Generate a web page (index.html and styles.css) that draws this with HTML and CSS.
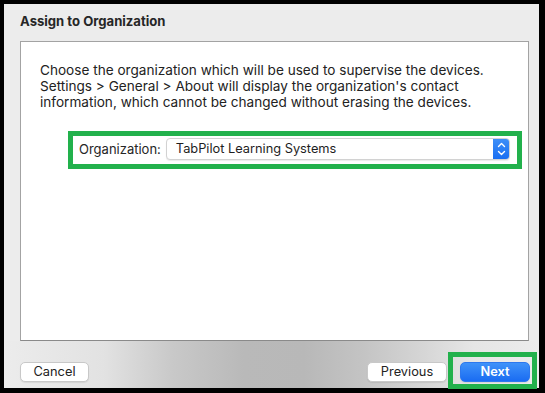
FILE: index.html
```html
<!DOCTYPE html>
<html>
<head>
<meta charset="utf-8">
<link rel="stylesheet" href="styles.css">
</head>
<body>
<div class="window">
  <div class="title">Assign to Organization</div>
  <div class="content">
    <p class="desc">Choose the organization which will be used to supervise the devices.<br>Settings &gt; General &gt; About will display the organization's contact<br>information, which cannot be changed without erasing the devices.</p>
    <div class="org-row">
      <span class="org-label">Organization:</span>
      <div class="popup">
        <span class="popup-text">TabPilot Learning Systems</span>
        <span class="stepper">
          <svg width="17" height="22" viewBox="0 0 17 22"><path d="M5.5 8.5 L8.5 5.5 L11.5 8.5" fill="none" stroke="#fff" stroke-width="1.4" stroke-linecap="round" stroke-linejoin="round"/><path d="M5.5 13.5 L8.5 16.5 L11.5 13.5" fill="none" stroke="#fff" stroke-width="1.4" stroke-linecap="round" stroke-linejoin="round"/></svg>
        </span>
      </div>
    </div>
  </div>
  <div class="footer">
    <button class="btn">Cancel</button>
    <div class="spacer"></div>
    <button class="btn">Previous</button>
    <button class="btn primary">Next</button>
  </div>
</div>
<div class="highlight-next"></div>
</body>
</html>
```
FILE: styles.css
```css
html, body {
  margin: 0;
  padding: 0;
  background: #000;
  width: 545px;
  height: 393px;
  overflow: hidden;
  font-family: "Inter", "Liberation Sans", sans-serif;
}
body {
  position: relative;
  padding: 4px 6px 5px 4px;
  box-sizing: border-box;
}
.window {
  background: #ececec;
  height: 384px;
  display: flex;
  flex-direction: column;
}
.title {
  height: 37px;
  box-sizing: border-box;
  padding: 9px 0 0 16px;
  font-size: 13.1px;
  font-weight: 700;
  color: #262626;
}
.content {
  margin: 0 10px 0 16px;
  height: 300px;
  background: #fff;
  border: 1px solid #a3a3a3;
  border-bottom-color: #8a8a8a;
  box-sizing: border-box;
  padding: 20px 0 0 19px;
}
.desc {
  margin: 0;
  font-size: 13.6px;
  line-height: 16px;
  color: #222;
}
.org-row {
  margin: 21px 0 0 28px;
  width: 454px;
  height: 38px;
  box-sizing: border-box;
  border: 5px solid #22b14c;
  display: flex;
  align-items: center;
  padding: 0 7px 3px 6px;
}
.org-label {
  font-size: 13px;
  color: #262626;
  margin-right: 5px;
}
.popup {
  flex: 1;
  height: 22px;
  box-sizing: border-box;
  border: 1px solid #d2d2d2;
  border-radius: 4px;
  background: #fff;
  box-shadow: 0 1px 1px rgba(0,0,0,0.08);
  display: flex;
  align-items: center;
  overflow: hidden;
}
.popup-text {
  flex: 1;
  padding-left: 9px;
  font-size: 12.8px;
  color: #1e1e1e;
}
.stepper {
  width: 17px;
  height: 22px;
  margin: -1px -1px -1px 0;
  background: linear-gradient(#3f90f8, #176df2);
  border-radius: 0 4px 4px 0;
  display: flex;
}
.footer {
  flex: 1;
  display: flex;
  align-items: flex-start;
  padding: 21px 9px 0 16px;
  background: linear-gradient(90deg, #ececec 0px, #e2e2e2 100px, #c8c8c8 170px, #b9b9b9 240px, #b8b8b8 300px, #c4c4c4 360px, #d6d6d6 420px, #e6e6e6 470px, #ececec 535px);
}
.spacer { flex: 1; }
.btn {
  height: 20px;
  box-sizing: border-box;
  border: 1px solid #c8c8c8;
  border-radius: 5px;
  background: #fff;
  box-shadow: 0 1px 1px rgba(0,0,0,0.08);
  font-family: inherit;
  font-size: 12.8px;
  color: #222;
  padding: 0;
  width: 69px;
  line-height: 18px;
}
.btn + .btn { margin-left: 13px; }
.footer .btn:nth-of-type(2) { width: 80px; }
.btn.primary {
  width: 70px;
  background: linear-gradient(#3f92f9, #1a6cf2);
  border-color: #2d78ee;
  color: #fff;
  font-weight: 600;
}
.highlight-next {
  position: absolute;
  left: 448px;
  top: 352px;
  width: 89px;
  height: 37px;
  box-sizing: border-box;
  border: 5px solid #22b14c;
}
```
